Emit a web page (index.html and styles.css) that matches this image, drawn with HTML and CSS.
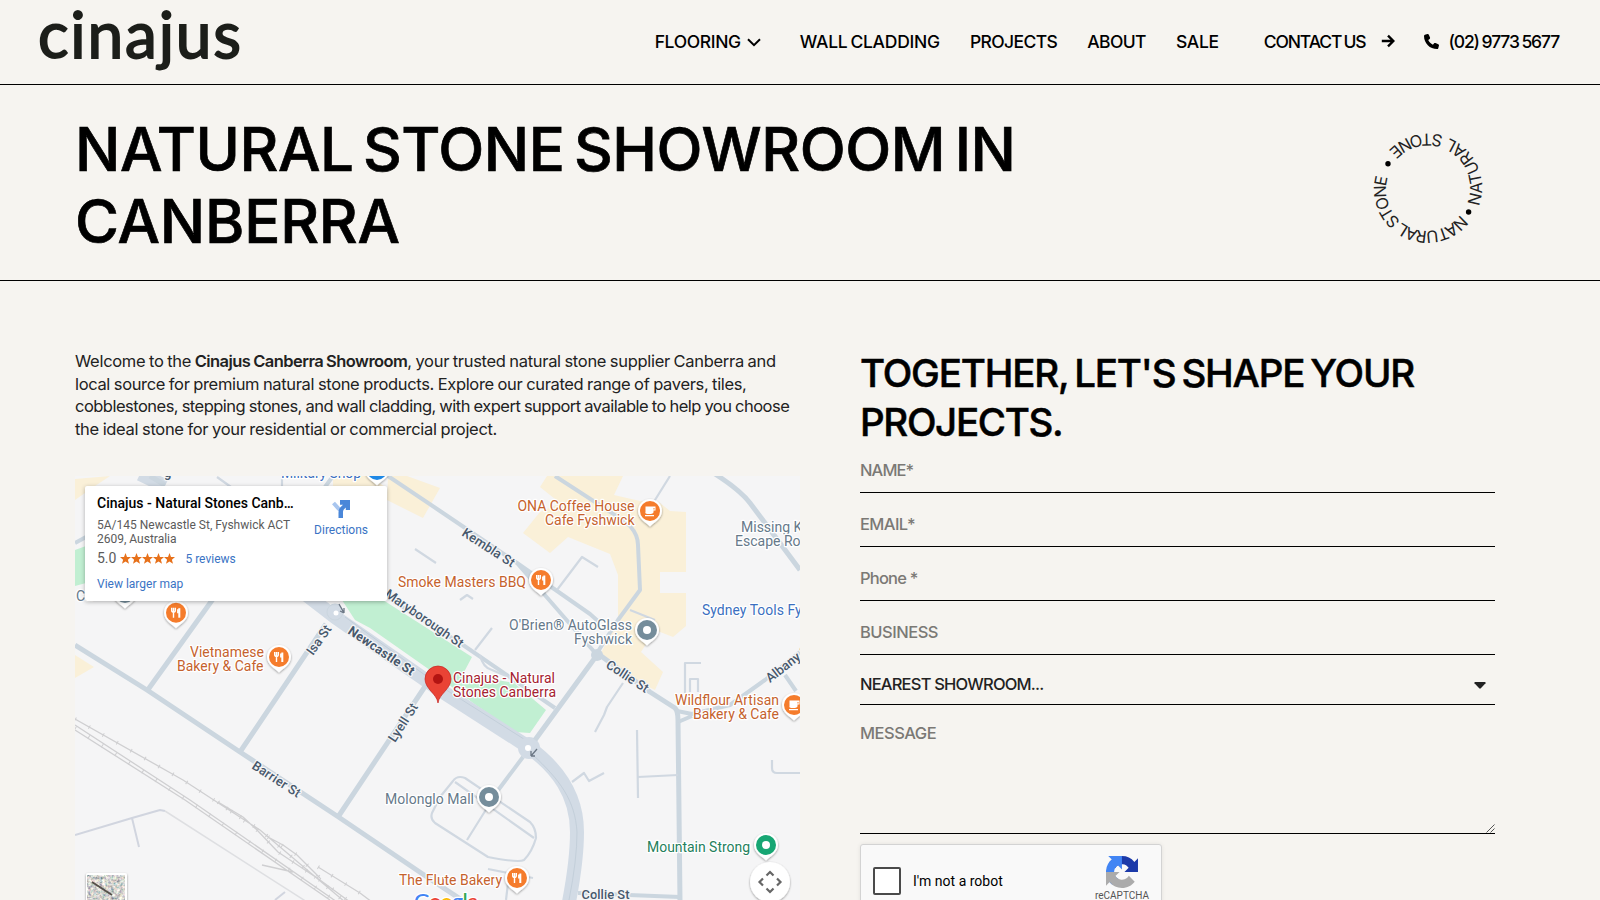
FILE: index.html
```html
<!DOCTYPE html>
<html lang="en">
<head>
<meta charset="utf-8">
<title>Natural Stone Showroom in Canberra | Cinajus</title>
<link rel="stylesheet" href="styles.css">
</head>
<body>
<header class="header">
  <svg class="logo" viewBox="0 0 204 84" width="204" height="84" role="img" aria-label="cinajus"><text x="-1" y="58.300" textLength="203">cinajus</text></svg>
  <nav class="nav">
    <a class="n-floor">FLOORING</a>
    <svg class="chev" viewBox="0 0 14 9" width="14" height="9"><path d="M1 1.2 7 7.2 13 1.2"/></svg>
    <a class="n-wall">WALL CLADDING</a>
    <a class="n-proj">PROJECTS</a>
    <a class="n-about">ABOUT</a>
    <a class="n-sale">SALE</a>
    <a class="n-contact">CONTACT US</a>
    <svg class="arrow" viewBox="0 0 14 14" width="14" height="14"><path d="M.8 7H12M7 1.6 12.4 7 7 12.4"/></svg>
    <svg class="phone" viewBox="0 0 512 512" width="15" height="15"><path d="M164.900 24.600c-7.700-18.600-28-28.500-47.400-23.200l-88 24C12.100 30.200 0 46 0 64c0 247.400 200.600 448 448 448 18 0 33.800-12.100 38.600-29.500l24-88c5.300-19.400-4.600-39.700-23.200-47.400l-96-40c-16.300-6.800-35.200-2.100-46.300 11.600L304.700 368C234.300 334.700 177.300 277.700 144 207.300L193.300 167c13.700-11.200 18.400-30 11.600-46.300l-40-96z"/></svg>
    <a class="n-tel">(02) 9773 5677</a>
  </nav>
</header>
<section class="hero">
  <h1><span class="h1a">NATURAL STONE SHOWROOM IN</span><br><span class="h1b">CANBERRA</span></h1>
  <svg class="badge" viewBox="0 0 126 126" width="126" height="126">
    <path id="ringTop" d="M113.700 81.400A54 54 0 0 0 20.200 29.800"/>
    <path id="ringBottom" d="M95.500 89.500A41.500 41.500 0 0 1 24.800 46.900"/>
    <text><textPath href="#ringTop" textLength="148">NATURAL STONE</textPath></text>
    <text><textPath href="#ringBottom" textLength="116">NATURAL STONE</textPath></text>
    <circle cx="23" cy="38.800" r="2.700"/><circle cx="103.600" cy="87" r="2.700"/>
  </svg>
</section>
<main class="main">
  <div class="left">
    <p class="intro"><span class="l1">Welcome to the <b>Cinajus Canberra Showroom</b>, your trusted natural stone supplier Canberra and</span><br><span class="l2">local source for premium natural stone products. Explore our curated range of pavers, tiles,</span><br><span class="l3">cobblestones, stepping stones, and wall cladding, with expert support available to help you choose</span><br><span class="l4">the ideal stone for your residential or commercial project.</span></p>
    <div class="mapbox">
      <svg class="map" viewBox="75 476 725 424" width="725" height="424">
        <defs>
          <filter id="sh" x="-30%" y="-30%" width="160%" height="160%"><feDropShadow dx="0" dy="1" stdDeviation="1" flood-opacity=".4"/></filter>
          <filter id="rock" x="0" y="0" width="100%" height="100%"><feTurbulence type="fractalNoise" baseFrequency=".35" numOctaves="3" seed="4"/><feColorMatrix values="1.300 .3 0 0 -.15 .9 .7 0 0 -.15 .7 .5 .4 0 -.18 0 0 0 0 1"/></filter>
          <g id="drop"><path d="M0 15.500C-3 12-12 8-12 0A12 12 0 0 1 12 0C12 8 3 12 0 15.500Z" fill="#fff" filter="url(#sh)"/><circle r="10"/></g>
          <g id="fork" fill="none" stroke="#fff"><path d="M-4.300-5V-2.200Q-4.300-.5-2.500-.5T-.7-2.200V-5M-2.500-5V5" stroke-width="1.400"/><path d="M3.300 5V-4.500" stroke-width="2"/><path d="M2-3.500V.5" stroke-width="1.800"/></g>
          <g id="cup"><path d="M-4.500-4.500H5.500V-.5H3.500V1Q3.500 3-1 3T-4.500 1ZM-5 4H4V5.300H-5Z" fill="#fff"/><path d="M3.500-3H4.500V-1.500H3.500Z" fill="#f57c2c"/></g>
        </defs>
        <rect x="75" y="476" width="725" height="424" fill="#f5f5f6"/>
        <g fill="#faf0d8">
          <path d="M547 476H623L614 495 640 501 660 503 670 511 686 512V572H660V593H686V626L673 637 655 630 641 652 663 672 655 690 618 672 600 655 618 620V575L610 554 568 537 550 553 523 533 540 512 560 503 540 487Z"/>
          <path d="M388 476H407L440 488 423 518 387 500Z"/><path d="M333 476H370L385 487H333ZM75 479 110 476 95 486 75 500ZM75 655 94 667 75 678Z"/>
        </g>
        <g fill="#c1efd2"><path d="M342 600H383L472 657 463 674 514 683 546 710 530 733 515 732 473 703 427 668 370 628 355 620ZM75 550 86 546V583L75 586Z"/></g>
        <g fill="none" stroke="#cbd6df" stroke-linejoin="round">
          <g stroke="#d2dbe5"><path stroke-width="14" d="M140 474 165 486M300 590 335 617 440 690 527 746C558 768 577 795 577 832Q577 860 569 902"/></g>
          <path stroke="#c3cfda" stroke-width="1" d="M345 617 440 686 527 741M532 754C560 780 575 800 577 832Q577 860 569 900"/>
          <circle cx="335" cy="612" r="8" fill="#d2dbe5"/><circle cx="529" cy="748" r="11" fill="#d2dbe5" stroke="none"/>
          <circle cx="597" cy="655" r="6" fill="#cbd6df" stroke="none"/>
          <path stroke-width="5" d="M75 645 147 690 240 752 337 816 430 879 465 902M218 592 147 691M326 624 240 752M426 685 338 817M715 474Q740 490 750 503L765 523 800 570M597 653 650 692 675 708Q678 711 678 720L680 902M535 740 597 655M150 476 165 485"/>
          <path stroke-width="4" d="M388 476 440 511 517 563 597 655M555 476 612 513 630 526Q638 535 638 545L640 590 618 620 597 653M387 597 463 645 555 708M677 711 692 714 730 705 765 680 800 652M678 722 692 716M785 675 796 691M578 893 680 897M523 757 487 805M75 543 86 537M325 487 333 476M517 563 590 614 599 622"/>
          <g stroke="#d0d8e1" stroke-width="2.200"><path d="M670 476 650 508M637 730 638 798M638 777 678 775M623 683 607 707 604 715 595 732M557 590 582 557 598 567M492 628 475 650M480 655Q483 668 492 670L525 684M460 600 467 595 473 599M630 610 655 620M415 549 436 563M217 477 231 487M282 477V487M685 693V663H701M690 692V679H698V692M772 760V768Q772 773 777 773H800M572 782 584 773 589 781 604 773"/>
          <path d="M440 797 453 781Q457 775 465 778L530 822Q536 828 536 838 532 852 524 860 519 863 488 857L435 823Q430 819 432 813L440 797M455 782 534 838M487 808 467 840M488 869 533 878M508 883 506 900M430 879 460 900"/></g>
          <path stroke="#d1d5df" stroke-width="2" d="M75 835 132 818 160 810 165 811M132 818 139 847M275 900 285 892"/>
          <path stroke="#dedfe2" stroke-width="1.500" d="M165 811 307 902"/>
          <g stroke="#cfcfd1" stroke-width="1.300"><path d="M75 719 183 780 260 830 345 902M75 725 190 800 337 902M75 730 185 800 330 900M218 802 243 817 257 830 278 852 320 880 350 902M268 837 283 845 297 855 320 878M318 867 360 893 372 902M262 865 293 872"/></g>
          <path stroke="#cfcfd1" stroke-width="4" stroke-dasharray="1 15" d="M75 719 183 780 260 830 345 902M75 728 190 802 337 902M218 802 257 830 278 852 320 880 350 902M268 837 297 855 320 878M318 867 360 893"/>
        </g>
        <circle cx="336" cy="613" r="2.500" fill="#fff"/><circle cx="528" cy="748" r="3" fill="#fff"/>
        <path d="M339 604 344 613M344 613v-5M344 613l-4-2M537 749 531 756M531 756v-5M531 756h4" stroke="#6b7785" stroke-width="1.300" fill="none"/>
        <g class="street">
          <text transform="translate(461 535) rotate(33)" textLength="60">Kembla St</text>
          <text transform="translate(347 633) rotate(34)" textLength="77" class="bold">Newcastle St</text>
          <text transform="translate(384 596) rotate(34.500)" textLength="92">Maryborough St</text>
          <text transform="translate(313 656) rotate(-55)" textLength="33">Isa St</text>
          <text transform="translate(395 743) rotate(-57)" textLength="43">Lyell St</text>
          <text transform="translate(251 768) rotate(33)" textLength="55">Barrier St</text>
          <text transform="translate(605 667) rotate(33)" textLength="48">Collie St</text>
          <text transform="translate(770 683) rotate(-38)">Albany St</text>
          <text x="581.500" y="898.500" textLength="48">Collie St</text>
          <text x="164" y="477">g</text>
        </g>
        <g class="poi">
          <g fill="#c5622d">
          <text x="517.500" y="511" textLength="117">ONA Coffee House</text><text x="545" y="525" textLength="89.500">Cafe Fyshwick</text>
          <text x="398" y="587" textLength="128">Smoke Masters BBQ</text>
          <text x="190" y="657" textLength="74">Vietnamese</text><text x="177" y="671" textLength="86.500">Bakery &amp; Cafe</text>
          <text x="675" y="705" textLength="104">Wildflour Artisan</text><text x="693" y="719" textLength="86">Bakery &amp; Cafe</text>
          <text x="399" y="885" textLength="103">The Flute Bakery</text></g>
          <g fill="#66798a">
          <text x="509" y="630" textLength="123">O'Brien® AutoGlass</text><text x="574" y="644" textLength="58">Fyshwick</text>
          <text x="385" y="804" textLength="89">Molonglo Mall</text><text x="741" y="532">Missing Key</text><text x="735" y="546">Escape Rooms</text><text x="76" y="601">Ca</text></g>
          <g fill="#3b6fc0"><text x="702" y="615" textLength="143">Sydney Tools Fyshwick</text><text x="281" y="477.500" textLength="80">Military Shop</text></g>
          <text x="647" y="852" textLength="103" fill="#24805c">Mountain Strong</text>
          <g fill="#a52231"><text x="453" y="683" textLength="102">Cinajus - Natural</text><text x="453" y="697" textLength="103">Stones Canberra</text></g>
        </g>
        <g fill="#f57c2c">
          <g transform="translate(650 511)"><use href="#drop"/><use href="#cup"/></g>
          <g transform="translate(541 580)"><use href="#drop"/><use href="#fork"/></g>
          <g transform="translate(176 612.700)"><use href="#drop"/><use href="#fork"/></g>
          <g transform="translate(279 657)"><use href="#drop"/><use href="#fork"/></g>
          <g transform="translate(794 705)"><use href="#drop"/><use href="#cup"/></g>
          <g transform="translate(517 878)"><use href="#drop"/><use href="#fork"/></g>
        </g>
        <g fill="#758d9b"><g transform="translate(647 630)"><use href="#drop"/><circle r="4" fill="#fff"/></g><g transform="translate(489 797)"><use href="#drop"/><circle r="4" fill="#fff"/></g><g transform="translate(125 593)"><use href="#drop"/></g></g>
        <g transform="translate(766 845)" fill="#17a673"><use href="#drop"/><circle r="4" fill="#fff"/></g>
        <g transform="translate(377 470)" fill="#1e88e5"><use href="#drop"/></g>
        <path d="M438 703C437 694 425 689 425 679A13 13 0 0 1 451 679C451 689 439 694 438 703Z" fill="#ea4335" stroke="#c5221f" stroke-width=".7"/><circle cx="438" cy="679" r="5" fill="#b31412"/>
        <text class="google" x="414" y="909"><tspan fill="#4285f4">G</tspan><tspan fill="#ea4335">o</tspan><tspan fill="#fbbc04">o</tspan><tspan fill="#4285f4">g</tspan><tspan fill="#34a853">l</tspan><tspan fill="#ea4335">e</tspan></text>
        <g filter="url(#sh)"><rect x="86" y="873" width="41" height="41" rx="2" fill="#fff"/></g>
        <rect x="87.500" y="875" width="37" height="37" filter="url(#rock)"/><path d="M92 882 112 895" stroke="#55504a" stroke-width="2"/>
        <circle cx="770" cy="882" r="20" fill="#fff" filter="url(#sh)"/>
        <path d="M766.500 875.500 770 872 773.500 875.500M766.500 888.500 770 892 773.500 888.500M763 878.500 759.500 882 763 885.500M777 878.500 780.500 882 777 885.500" fill="none" stroke="#666" stroke-width="2.200"/>
      </svg>
      <div class="card">
        <div class="info">
          <div class="place">Cinajus - Natural Stones Canb…</div>
          <div class="addr">5A/145 Newcastle St, Fyshwick ACT<br>2609, Australia</div>
          <div class="rating"><span class="score">5.0</span><svg viewBox="0 0 55 11" width="55" height="11"><path d="M5.500 0 7 3.900 11 4.100 7.900 6.700 9 10.700 5.500 8.400 2 10.700 3.100 6.700 0 4.100 4 3.900Z" id="star"/><use href="#star" x="11"/><use href="#star" x="22"/><use href="#star" x="33"/><use href="#star" x="44"/></svg><span class="rev">5 reviews</span></div>
          <div class="larger">View larger map</div>
        </div>
        <div class="dir"><svg viewBox="0 0 18 18" width="18" height="18"><path d="M1.500 3 6.500 8.500 9.500 11" stroke="#a9c6ef" stroke-width="4" fill="none"/><path d="M6.500 18V12.500Q6.500 9 8.500 7.200L11 4.700H8V0H18V10H13.800V7.500L11.800 9.500Q11 10.500 11 12V18Z" fill="#4a87d9"/></svg><span>Directions</span></div>
      </div>
    </div>
  </div>
  <form class="form">
    <h2><span class="h2a">TOGETHER, LET'S SHAPE YOUR</span><br><span class="h2b">PROJECTS.</span></h2>
    <div class="field"><span class="f1">NAME*</span></div>
    <div class="field"><span class="f2">EMAIL*</span></div>
    <div class="field"><span class="f3">Phone *</span></div>
    <div class="field"><span class="f4">BUSINESS</span></div>
    <div class="select"><span>NEAREST SHOWROOM...</span><svg viewBox="0 0 12 7" width="12" height="7"><path d="M1 0H11Q12 .3 11.500 1.200L6.800 6.300Q6 7 5.200 6.300L.5 1.200Q0 .3 1 0Z"/></svg></div>
    <div class="message"><span>MESSAGE</span><svg viewBox="0 0 9 9" width="9" height="9"><path d="M.5 8.500 8.500.5M4.500 8.500 8.500 4.500"/></svg></div>
    <div class="captcha">
      <i class="check"></i><span class="robot">I'm not a robot</span>
      <div class="re">
        <svg viewBox="0 0 64 64" width="32" height="32"><path fill="#1c3aa9" d="M64 31.950a33 33 0 0 0-.04-1.370V4.590l-7.180 7.180A31.900 31.900 0 0 0 32.040.01c-10.400 0-19.650 4.960-25.490 12.630l11.780 11.900a15.600 15.600 0 0 1 4.770-5.350c2.060-1.600 4.970-2.920 9-2.920.48 0 .86.060 1.130.160a15.600 15.600 0 0 1 12.040 7.260l-8.340 8.340L64 31.950"/><path fill="#4285f4" d="M31.860.01a33 33 0 0 0-1.370.04H4.500l7.180 7.180A31.900 31.900 0 0 0-.08 31.970c0 10.400 4.960 19.650 12.630 25.490l11.900-11.780a15.600 15.600 0 0 1-5.350-4.770c-1.600-2.060-2.920-4.970-2.920-9 0-.48.060-.86.160-1.130A15.600 15.600 0 0 1 23.600 18.740l8.340 8.340L31.860.01"/><path fill="#ababab" d="M.010 31.950q0 .7.040 1.370v25.990l7.180-7.180A31.900 31.900 0 0 0 31.970 63.900c10.400 0 19.650-4.960 25.490-12.630L45.680 39.360a15.600 15.600 0 0 1-4.770 5.350c-2.060 1.600-4.970 2.920-9 2.920-.48 0-.86-.060-1.130-.160A15.600 15.600 0 0 1 18.740 40.210l8.340-8.340L.01 31.950"/></svg>
        <span>reCAPTCHA</span>
      </div>
    </div>
  </form>
</main>
</body>
</html>
```
FILE: styles.css
```css
* { box-sizing: border-box; }
body { margin: 0; height: 900px; overflow: hidden; background: #f6f4f0; color: #000; font-family: Inter, "Liberation Sans", sans-serif; }
.header { height: 85px; border-bottom: 1px solid #000; padding: 0 41px 0 39px; display: flex; justify-content: space-between; }
.logo { overflow: visible; }
.logo text { font: 400 64px Lato, sans-serif; fill: #1c1e1a; stroke: #1c1e1a; stroke-width: 1.800px; }
.nav { display: flex; align-items: center; height: 82px; font-size: 17.5px; font-weight: 500; white-space: nowrap; letter-spacing: -.6px; word-spacing: -1px; }
.chev { margin: 3px 39px 0 6px; fill: none; stroke: #000; stroke-width: 2; }
.arrow { margin: 0 29px 0 15px; fill: none; stroke: #000; stroke-width: 2.400; }
.phone { margin-right: 10px; }
.n-wall, .n-proj, .n-about { margin-right: 30px; }
.n-floor { letter-spacing: -.35px; }
.n-wall { letter-spacing: -.25px; word-spacing: -1.500px; }
.n-sale { margin-right: 45px; letter-spacing: -.35px; }
.n-contact { letter-spacing: -1.100px; word-spacing: -1.500px; }
.n-tel { letter-spacing: -1.150px; word-spacing: -.8px; }
.hero { height: 196px; border-bottom: 1px solid #000; padding: 28px 109px 0 75px; display: flex; justify-content: space-between; }
h1, h2, p { margin: 0; }
h1 { font-size: 60px; line-height: 72px; font-weight: 500; white-space: nowrap; letter-spacing: -.45px; word-spacing: -6px; -webkit-text-stroke: .7px #000; }
.h1b { letter-spacing: -.2px; }
.badge { margin-top: 12px; overflow: visible; }
.badge path { fill: none; }
.badge text { font: 400 16.500px Inter, sans-serif; fill: #222; }
.main { display: grid; grid-template-columns: 725px 635px; column-gap: 60px; padding: 69px 0 0 75px; }
.intro { height: 126px; font-size: 16.500px; line-height: 22.700px; color: #222; white-space: nowrap; letter-spacing: -.5px; word-spacing: -.5px; }
.intro b { font-weight: 600; letter-spacing: -.55px; }
.l1 { letter-spacing: -.3px; word-spacing: -.7px; }
.l2 { letter-spacing: -.35px; }
.l3 { letter-spacing: -.52px; }
.l4 { letter-spacing: -.32px; }
.mapbox { position: relative; height: 424px; overflow: hidden; font-family: Roboto, sans-serif; }
.map { display: block; }
.map text { font-family: Roboto, sans-serif; font-size: 14px; paint-order: stroke; stroke: #fff; stroke-width: 2.500px; stroke-linejoin: round; }
.street text { fill: #47586c; font-size: 13px; font-weight: 500; stroke: #f5f5f6; }
.street .bold { font-weight: 700; font-size: 13px; }
.map .google { font: 500 22px Lato, sans-serif; letter-spacing: -1px; }
.card { position: absolute; left: 10px; top: 10px; width: 302px; height: 115px; background: #fff; border-radius: 2px; box-shadow: 0 1px 4px rgba(0,0,0,.3); display: flex; padding: 8px 19px 0 12px; justify-content: space-between; }
.place { font-size: 14px; line-height: 18px; font-weight: 500; }
.addr { font-size: 12px; line-height: 14px; color: #5b5b5b; margin-top: 6px; }
.rating { display: flex; align-items: center; height: 18px; margin-top: 3px; }
.score { font-size: 14px; color: #5b5b5b; margin-right: 4px; }
.rating svg { fill: #e7711b; }
.rev { font-size: 12px; color: #3a73c4; margin-left: 10px; padding-top: 1px; }
.larger { font-size: 12px; line-height: 14px; margin-top: 10px; color: #3a73c4; }
.dir { display: flex; flex-direction: column; align-items: center; font-size: 12px; line-height: 14px; color: #3a73c4; padding-top: 6px; }
.dir svg { margin-bottom: 5px; }
h2 { font-size: 38.500px; line-height: 49px; font-weight: 500; white-space: nowrap; letter-spacing: -1.180px; word-spacing: -3px; height: 98px; margin-top: -1px; -webkit-text-stroke: .5px #000; }
.h2b { letter-spacing: -1.350px; }
.form { font-size: 16.500px; font-weight: 500; letter-spacing: -.6px; line-height: 20px; }
.f1 { letter-spacing: -.9px; }
.f3, .select { letter-spacing: -.8px; }
.f4, .message { letter-spacing: -.5px; }
.field { height: 54px; border-bottom: 1px solid #000; color: #7b7975; padding-top: 21px; }
.field:nth-of-type(1) { height: 46px; padding-top: 13px; }
.select { height: 50px; border-bottom: 1px solid #000; padding: 19px 9px 0 0; color: #222; display: flex; justify-content: space-between; }
.select svg { margin-top: 8px; fill: #222; }
.message { height: 129px; border-bottom: 1px solid #000; padding-top: 18px; color: #7b7975; display: flex; justify-content: space-between; }
.message svg { align-self: flex-end; stroke: #555; }
.captcha { margin-top: 10px; width: 302px; height: 76px; border: 1px solid #d3d3d3; border-radius: 3px; background: #f9f9f9; box-shadow: 0 0 4px rgba(0,0,0,.08); display: flex; align-items: flex-start; font-family: Roboto, sans-serif; font-weight: 400; letter-spacing: 0; padding: 0 12px 0 12px; }
.check { width: 28px; height: 28px; margin-top: 22px; border: 2px solid #4a4a4a; border-radius: 2px; background: #fff; }
.robot { font-size: 14px; margin: 26px 0 0 12px; }
.re { margin-left: auto; display: flex; flex-direction: column; align-items: center; font-size: 10px; line-height: 12px; color: #555; padding-top: 11px; }
.re span { margin-top: 2px; }
```
